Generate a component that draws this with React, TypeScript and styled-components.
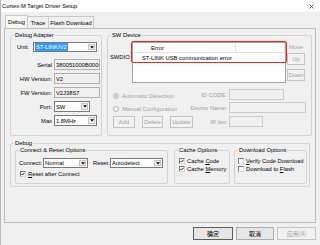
import React from "react";
import styled, { createGlobalStyle } from "styled-components";

const Global = createGlobalStyle`
  html, body { margin: 0; padding: 0; background: #f0f0f0; }
  body { font-family: "Liberation Sans", Arial, sans-serif; font-size: 5.8px; color: #000; }
  * { box-sizing: border-box; }
`;

const Window = styled.div`
  width: 320px;
  height: 245px;
  background: #f0f0f0;
  border-left: 1px solid #b8b8b8;
  overflow: hidden;
  display: flex;
  flex-direction: column;
`;

const TitleBar = styled.div`
  flex: none;
  height: 12px;
  background: #fff;
  display: flex;
  align-items: center;
  justify-content: space-between;
  padding: 0 6px 0 1px;
  white-space: nowrap;
`;

const Body = styled.div`
  padding: 3px 3px 0 3px;
  display: flex;
  flex-direction: column;
`;

const TabStrip = styled.div`
  display: flex;
  align-items: flex-end;
  height: 13px;
  padding-left: 1px;
`;

const Tab = styled.div<{ $w: number; $active?: boolean }>`
  width: ${(p) => p.$w}px;
  height: ${(p) => (p.$active ? 13 : 12)}px;
  margin-right: -1px;
  border: 1px solid #c9c9c9;
  border-bottom: none;
  background: ${(p) => (p.$active ? "#f7f7f7" : "#f0f0f0")};
  display: flex;
  align-items: center;
  justify-content: center;
  white-space: nowrap;
  position: relative;
  z-index: ${(p) => (p.$active ? 1 : 0)};
`;

const TabPanel = styled.div`
  width: 312px;
  height: 195px;
  border: 1px solid #bdbdbd;
  padding: 6px 5px 0 5px;
  display: flex;
  flex-direction: column;
`;

const TopRow = styled.div`
  display: flex;
  gap: 5px;
  height: 101px;
`;

const Group = styled.div<{ $w: number; $h?: number }>`
  width: ${(p) => p.$w}px;
  ${(p) => (p.$h ? `height: ${p.$h}px;` : "")}
  flex: none;
  border: 1px solid #d3d3d3;
  border-radius: 2px;
  display: flex;
  flex-direction: column;
`;

const Legend = styled.div`
  align-self: flex-start;
  margin: -4px 0 0 3px;
  padding: 0 1px;
  height: 7px;
  line-height: 7px;
  background: #f0f0f0;
  white-space: nowrap;
`;

const UnitRow = styled.div`
  display: flex;
  align-items: center;
  margin-top: 3px;
  padding-left: 6px;
  height: 10px;
`;

const UnitLabel = styled.span`
  width: 16px;
`;

const FormGrid = styled.div`
  margin-top: 7px;
  display: grid;
  grid-template-columns: 41px 46px;
  grid-auto-rows: 11px;
  column-gap: 2px;
  row-gap: 3px;
`;

const RightLabel = styled.span`
  display: flex;
  align-items: center;
  justify-content: flex-end;
  white-space: nowrap;
  color: ${(p: { $disabled?: boolean }) => (p.$disabled ? "#a0a0a0" : "#000")};
`;

const Field = styled.div<{ $w?: number; $disabled?: boolean }>`
  ${(p) => (p.$w ? `width: ${p.$w}px;` : "")}
  height: 11px;
  border: 1px solid ${(p) => (p.$disabled ? "#cacaca" : "#b0b0b0")};
  background: #f0f0f0;
  padding-left: 1px;
  display: flex;
  align-items: center;
  overflow: hidden;
  white-space: nowrap;
`;

const SelectBox = styled.div<{ $w: number; $h?: number }>`
  width: ${(p) => p.$w}px;
  height: ${(p) => p.$h ?? 10}px;
  border: 1px solid #7a7a7a;
  background: #fff;
  display: flex;
  align-items: stretch;
  flex: none;
`;

const SelectText = styled.div`
  flex: 1;
  display: flex;
  align-items: center;
  padding-left: 1px;
  overflow: hidden;
  white-space: nowrap;
`;

const Highlight = styled.span`
  align-self: stretch;
  display: flex;
  align-items: center;
  background: #3399ff;
  color: #fff;
  padding: 0 1px;
`;

const DropBtn = styled.div`
  width: 7px;
  margin: 1px;
  border: 1px solid #c4c4c4;
  background: #f0f0f0;
  display: flex;
  align-items: center;
  justify-content: center;
`;

const Select: React.FC<{ value: string; w: number; h?: number; hl?: boolean }> = ({ value, w, h, hl }) => (
  <SelectBox $w={w} $h={h}>
    <SelectText>{hl ? <Highlight>{value}</Highlight> : value}</SelectText>
    <DropBtn>
      <svg width="4" height="3" viewBox="0 0 4 3">
        <path d="M0 0.3h4L2 2.6z" fill="#000" />
      </svg>
    </DropBtn>
  </SelectBox>
);

/* SW Device */
const ListRow = styled.div`
  display: flex;
  margin-top: 3px;
  padding-left: 2px;
`;

const SwdioLabel = styled.span`
  width: 22px;
  margin-top: 12px;
  line-height: 7px;
  white-space: nowrap;
`;

const ListWrap = styled.div`
  position: relative;
  width: 154px;
  height: 41px;
  flex: none;
`;

const ListBox = styled.div`
  width: 100%;
  height: 100%;
  border: 1px solid #a3a3a3;
  background: #fff;
  display: flex;
  flex-direction: column;
`;

const ListHeader = styled.div`
  display: flex;
  height: 10px;
  border-bottom: 1px solid #e3e3e3;
`;

const HeaderCell = styled.div<{ $w?: number; $pl?: number }>`
  ${(p) => (p.$w ? `width: ${p.$w}px;` : "flex: 1;")}
  padding-left: ${(p) => p.$pl ?? 0}px;
  border-right: 1px solid #e3e3e3;
  display: flex;
  align-items: center;
  white-space: nowrap;
`;

const ListItem = styled.div`
  height: 10px;
  padding-left: 9px;
  display: flex;
  align-items: center;
  white-space: nowrap;
`;

const RedMark = styled.div`
  position: absolute;
  left: -1px;
  top: -1px;
  width: 156px;
  height: 22px;
  border: 1.5px solid #ea2a22;
  border-radius: 2px;
`;

const SideCol = styled.div`
  width: 18px;
  margin-left: 1px;
  display: flex;
  flex-direction: column;
  align-items: stretch;
`;

const MoveLabel = styled.div`
  height: 10px;
  display: flex;
  align-items: center;
  justify-content: center;
  color: #a0a0a0;
`;

const Btn = styled.div<{ $w?: number; $h?: number; $mt?: number; $disabled?: boolean; $default?: boolean }>`
  ${(p) => (p.$w ? `width: ${p.$w}px;` : "")}
  height: ${(p) => p.$h ?? 12}px;
  margin-top: ${(p) => p.$mt ?? 0}px;
  flex: none;
  border: 1px solid ${(p) => (p.$default ? "#5e5e5e" : p.$disabled ? "#c4c4c4" : "#adadad")};
  background: ${(p) => (p.$disabled ? "#f2f2f2" : "#e6e6e6")};
  color: ${(p) => (p.$disabled ? "#a0a0a0" : "#000")};
  display: flex;
  align-items: center;
  justify-content: center;
  white-space: nowrap;
`;

const ConfigArea = styled.div`
  margin-top: 6px;
  padding: 0 5px;
  display: flex;
  flex-direction: column;
  gap: 2px;
`;

const ConfigRow = styled.div<{ $h?: number }>`
  display: grid;
  grid-template-columns: 1fr auto 77px;
  column-gap: 2px;
  height: ${(p) => p.$h ?? 11}px;
  align-items: center;
`;

const RadioItem = styled.div`
  display: flex;
  align-items: center;
  gap: 3px;
  color: #a0a0a0;
  white-space: nowrap;
  padding-top: 2px;
`;

const RadioDot = styled.span<{ $on?: boolean }>`
  width: 6px;
  height: 6px;
  border-radius: 50%;
  border: 1px solid #b4b4b4;
  background: #f4f4f4;
  display: flex;
  align-items: center;
  justify-content: center;
  &::after {
    content: "";
    width: 2px;
    height: 2px;
    border-radius: 50%;
    background: ${(p) => (p.$on ? "#a0a0a0" : "transparent")};
  }
`;

const BtnGroup = styled.div`
  display: flex;
  gap: 7px;
`;

/* Debug section */
const DebugGroupWrap = styled.div`
  margin-top: 7px;
`;

const InnerRow = styled.div`
  display: flex;
  margin-top: 3px;
  padding-left: 4px;
`;

const ConnectRow = styled.div`
  display: flex;
  align-items: center;
  margin-top: 4px;
  padding-left: 3px;
  height: 10px;
`;

const InlineLabel = styled.span<{ $w: number; $ml?: number }>`
  width: ${(p) => p.$w}px;
  margin-left: ${(p) => p.$ml ?? 0}px;
  white-space: nowrap;
`;

const CheckList = styled.div<{ $mt: number; $pl: number }>`
  margin-top: ${(p) => p.$mt}px;
  padding-left: ${(p) => p.$pl}px;
  display: flex;
  flex-direction: column;
`;

const CheckRow = styled.div`
  display: flex;
  align-items: center;
  gap: 2px;
  height: 8px;
  white-space: nowrap;
`;

const Box = styled.span`
  width: 6px;
  height: 6px;
  flex: none;
  border-top: 1px solid #7a7a7a;
  border-left: 1px solid #7a7a7a;
  border-right: 1px solid #d8d8d8;
  border-bottom: 1px solid #d8d8d8;
  background: #fff;
  display: flex;
  align-items: center;
  justify-content: center;
`;

const Check: React.FC<{ on?: boolean; children: React.ReactNode }> = ({ on, children }) => (
  <CheckRow>
    <Box>
      {on && (
        <svg width="4" height="4" viewBox="0 0 4 4">
          <path d="M0.4 1.9 L1.5 3 L3.6 0.7" stroke="#000" strokeWidth="0.9" fill="none" />
        </svg>
      )}
    </Box>
    <span>{children}</span>
  </CheckRow>
);

const ButtonBar = styled.div`
  margin-top: 4px;
  display: flex;
  justify-content: flex-end;
  gap: 3px;
  padding-right: 1px;
  font-family: "Noto Sans CJK SC", "Liberation Sans", sans-serif;
  font-size: 6px;
`;

export default function App() {
  return (
    <>
      <Global />
      <Window>
        <TitleBar>
          <span>Cortex-M Target Driver Setup</span>
          <svg width="5" height="5" viewBox="0 0 5 5">
            <path d="M0.5 0.5 L4.5 4.5 M4.5 0.5 L0.5 4.5" stroke="#333" strokeWidth="0.7" />
          </svg>
        </TitleBar>
        <Body>
          <TabStrip>
            <Tab $w={23} $active>Debug</Tab>
            <Tab $w={22}>Trace</Tab>
            <Tab $w={46}>Flash Download</Tab>
          </TabStrip>
          <TabPanel>
            <TopRow>
              <Group $w={92}>
                <Legend>Debug Adapter</Legend>
                <UnitRow>
                  <UnitLabel>Unit:</UnitLabel>
                  <Select value="ST-LINK/V2" w={64} hl />
                </UnitRow>
                <FormGrid>
                  <RightLabel>Serial</RightLabel>
                  <Field>380051000B000C57</Field>
                  <RightLabel>HW Version:</RightLabel>
                  <Field>V2</Field>
                  <RightLabel>FW Version:</RightLabel>
                  <Field>V2J38S7</Field>
                  <RightLabel>Port:</RightLabel>
                  <Select value="SW" w={36} h={11} />
                  <RightLabel>Max</RightLabel>
                  <Select value="1.8MHz" w={43} h={11} />
                </FormGrid>
              </Group>
              <Group $w={205}>
                <Legend>SW Device</Legend>
                <ListRow>
                  <SwdioLabel>SWDIO</SwdioLabel>
                  <ListWrap>
                    <ListBox>
                      <ListHeader>
                        <HeaderCell $w={103} $pl={18}>Error</HeaderCell>
                        <HeaderCell />
                      </ListHeader>
                      <ListItem>ST-LINK USB communication error</ListItem>
                    </ListBox>
                    <RedMark />
                  </ListWrap>
                  <SideCol>
                    <MoveLabel>Move</MoveLabel>
                    <Btn $mt={1} $disabled>Up</Btn>
                    <Btn $mt={4} $disabled>Down</Btn>
                  </SideCol>
                </ListRow>
                <ConfigArea>
                  <ConfigRow>
                    <RadioItem>
                      <RadioDot $on />
                      Automatic Detection
                    </RadioItem>
                    <RightLabel $disabled>ID CODE:</RightLabel>
                    <Field $w={55} $disabled />
                  </ConfigRow>
                  <ConfigRow>
                    <RadioItem>
                      <RadioDot />
                      Manual Configuration
                    </RadioItem>
                    <RightLabel $disabled>Device Name:</RightLabel>
                    <Field $w={77} $disabled />
                  </ConfigRow>
                  <ConfigRow $h={13}>
                    <BtnGroup>
                      <Btn $w={22} $disabled>Add</Btn>
                      <Btn $w={21} $disabled>Delete</Btn>
                      <Btn $w={23} $disabled>Update</Btn>
                    </BtnGroup>
                    <RightLabel $disabled>IR len:</RightLabel>
                    <Field $w={34} $disabled />
                  </ConfigRow>
                </ConfigArea>
              </Group>
            </TopRow>
            <DebugGroupWrap>
              <Group $w={300} $h={44}>
                <Legend>Debug</Legend>
                <InnerRow>
                  <Group $w={153} $h={34}>
                    <Legend>Connect &amp; Reset Options</Legend>
                    <ConnectRow>
                      <InlineLabel $w={24}>Connect:</InlineLabel>
                      <Select value="Normal" w={45} />
                      <InlineLabel $w={17} $ml={5}>Reset:</InlineLabel>
                      <Select value="Autodetect" w={53} />
                    </ConnectRow>
                    <CheckList $mt={2} $pl={4}>
                      <Check on>
                        <u>R</u>eset after Connect
                      </Check>
                    </CheckList>
                  </Group>
                  <Group $w={56} $h={34} style={{ marginLeft: 6 }}>
                    <Legend>Cache Options</Legend>
                    <CheckList $mt={3} $pl={4}>
                      <Check on>
                        Cache <u>C</u>ode
                      </Check>
                      <Check on>
                        Cache <u>M</u>emory
                      </Check>
                    </CheckList>
                  </Group>
                  <Group $w={73} $h={34} style={{ marginLeft: 4 }}>
                    <Legend>Download Options</Legend>
                    <CheckList $mt={3} $pl={3}>
                      <Check>
                        <u>V</u>erify Code Download
                      </Check>
                      <Check>
                        Download to <u>F</u>lash
                      </Check>
                    </CheckList>
                  </Group>
                </InnerRow>
              </Group>
            </DebugGroupWrap>
          </TabPanel>
          <ButtonBar>
            <Btn $w={40} $h={13} $default>确定</Btn>
            <Btn $w={38} $h={13}>取消</Btn>
            <Btn $w={39} $h={13} $disabled>应用(A)</Btn>
          </ButtonBar>
        </Body>
      </Window>
    </>
  );
}
